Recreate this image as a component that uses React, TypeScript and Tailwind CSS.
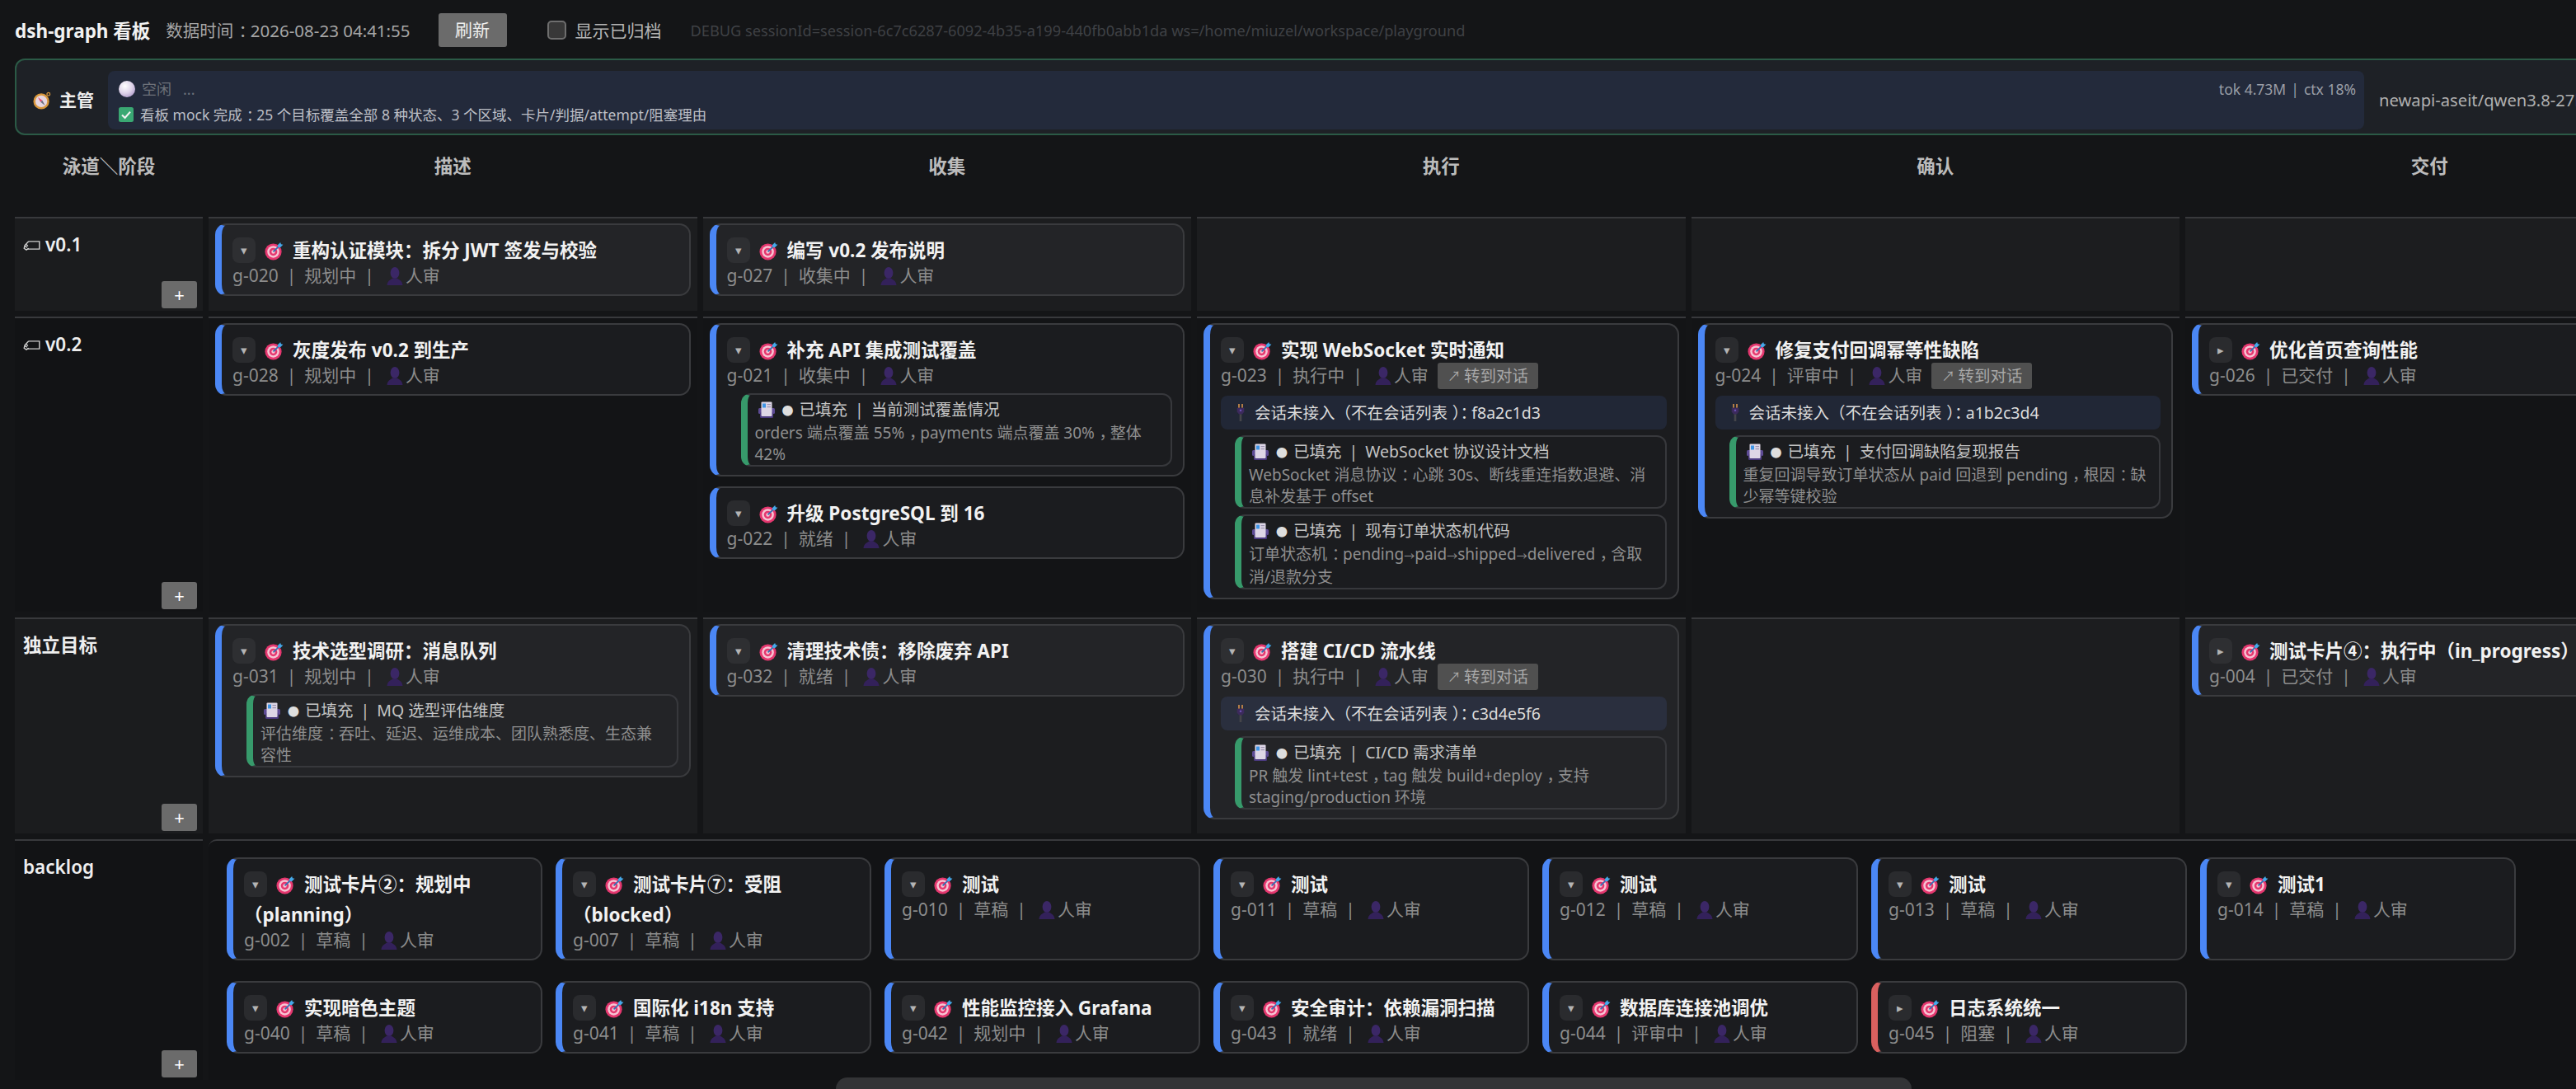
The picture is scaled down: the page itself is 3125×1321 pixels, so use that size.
import type { ReactNode } from "react";

// drawn emoji, no colour emoji font on the box
function Target() {
  return (
    <svg viewBox="0 0 24 24" className="mr-[11px] inline-block h-[23px] w-[23px] align-[-4px]">
      <circle cx="11" cy="13" r="10.5" fill="#e5376f" />
      <circle cx="11" cy="13" r="7.6" fill="#f7c4d3" />
      <circle cx="11" cy="13" r="5" fill="#e5376f" />
      <circle cx="11" cy="13" r="2.3" fill="#f7c4d3" />
      <path d="M11 13 L19 5" stroke="#2f6fb5" strokeWidth="1.8" />
      <path d="M16.5 4.5 L20 1 L20.8 3.4 L23.4 4 L19.8 7.6 L17 7 Z" fill="#45a9ea" />
    </svg>
  );
}

function Compass() {
  return (
    <svg viewBox="0 0 24 24" className="h-[22px] w-[22px] shrink-0">
      <circle cx="20.5" cy="3.5" r="2" fill="none" stroke="#d9973c" strokeWidth="1.4" />
      <circle cx="11" cy="13" r="10.5" fill="#d9973c" />
      <circle cx="11" cy="13" r="7.8" fill="#e6d6df" />
      <path d="M6.5 7.5 L12.4 11.8 L10 14 Z" fill="#e8476b" />
      <path d="M16 18.5 L10 14 L12.4 11.8 Z" fill="#6d6f80" />
    </svg>
  );
}

function Tag() {
  return (
    <svg viewBox="0 0 22 14" className="h-[13px] w-[21px] shrink-0" fill="none" stroke="#d0d0d0" strokeWidth="1.5">
      <path d="M7 2 H21 V12 H5" />
      <path d="M7 2 L2 7 L1 11 L4 13 L7 11 M3 5 L6 8 M2 8 L5 10" />
    </svg>
  );
}

function Person() {
  return (
    <svg viewBox="0 0 20 22" className="h-[22px] w-[20px] shrink-0">
      <ellipse cx="10" cy="7" rx="5.4" ry="7" fill="#3b2766" />
      <path d="M0.5 22 C1 16.5 5 15 7.5 13.5 H12.5 C15 15 19 16.5 19.5 22 Z" fill="#33215a" />
    </svg>
  );
}

function Plug() {
  return (
    <svg viewBox="0 0 10 22" className="h-[21px] w-[10px] shrink-0">
      <rect x="2" y="0" width="1.8" height="5" fill="#c98a4a" />
      <rect x="6.2" y="0" width="1.8" height="5" fill="#c98a4a" />
      <path d="M0.5 5 H9.5 V10 L7 13 H3 L0.5 10 Z" fill="#3c2a5c" />
      <rect x="3.8" y="7" width="2.4" height="2.4" fill="#6a4fb0" />
      <rect x="3.6" y="13" width="2.8" height="9" fill="#45454a" />
    </svg>
  );
}

function CardFile() {
  return (
    <svg viewBox="0 0 20 20" className="inline-block h-[20px] w-[20px] shrink-0">
      <rect x="0" y="8" width="20" height="7" rx="1.5" fill="#5d4b95" />
      <rect x="2" y="13" width="16" height="7" rx="1.5" fill="#4b3a80" />
      <rect x="3.5" y="0.5" width="13" height="17.5" rx="1" fill="#ddd6e6" />
      <rect x="5" y="2.5" width="4" height="5" fill="#3f95e6" />
      <rect x="10.5" y="3" width="4.5" height="1.2" fill="#9c93b0" />
      <rect x="10.5" y="6" width="4.5" height="1.2" fill="#9c93b0" />
    </svg>
  );
}

function Orb() {
  return (
    <svg viewBox="0 0 20 20" className="h-[20px] w-[20px] shrink-0">
      <defs>
        <radialGradient id="orb" cx="0.38" cy="0.32" r="0.8">
          <stop offset="0" stopColor="#ffffff" />
          <stop offset="0.55" stopColor="#ddd2e8" />
          <stop offset="1" stopColor="#a993c6" />
        </radialGradient>
      </defs>
      <circle cx="10" cy="10" r="10" fill="url(#orb)" />
    </svg>
  );
}

function Check() {
  return (
    <svg viewBox="0 0 18 18" className="h-[18px] w-[18px] shrink-0">
      <rect width="18" height="18" rx="2.5" fill="#3aa873" />
      <path d="M4 9.5 L7.6 13 L14 5.6" fill="none" stroke="#f2f2f2" strokeWidth="2.2" />
    </svg>
  );
}

// the reference's regular face centres full-width punctuation and has a narrow arrow
function Fw({ text }: { text: string }) {
  return (
    <>
      {text.split(/([）：，→])/).map((part, i) => {
        if (part === "→") return <span key={i} className="text-[13px]">{part}</span>;
        if (part === "）" || part === "：" || part === "，") {
          return <span key={i} className="pl-[0.3em] tracking-[-0.3em]">{part}</span>;
        }
        return part;
      })}
    </>
  );
}

type Note = { title: string; lines: string[] };

interface Goal {
  id: string;
  title: string;
  status: string;
  session?: string;
  notes?: Note[];
  closed?: boolean;
  blocked?: boolean;
}

function Meta({ goal }: { goal: Goal }) {
  return (
    <div className="mt-[1px] flex h-[24px] items-center whitespace-nowrap text-[21px] text-[#8c8c8c]">
      <span>{goal.id}</span>
      <span className="mx-[10px]">|</span>
      <span>{goal.status}</span>
      <span className="mx-[10px]">|</span>
      <span className="ml-[5px] mr-[3px]">
        <Person />
      </span>
      <span>人审</span>
      {goal.session && (
        <button className="ml-[11px] flex h-[32px] items-center gap-[4px] rounded-[3px] bg-[#505050] px-[12px] text-[19.5px] text-[#a8a8a8]">
          <span className="text-[16px]">↗</span>
          转到对话
        </button>
      )}
    </div>
  );
}

function NoteCard({ note }: { note: Note }) {
  return (
    <div className="ml-[17px] rounded-[12px] border-2 border-l-[8px] border-[#37383c] border-l-[#379a6b] pl-[9px] pr-[12px] pt-[5px]">
      <div className="flex h-[26px] items-center whitespace-nowrap pl-[4px] text-[19.5px] text-[#c4c4c4]">
        <CardFile />
        <span className="ml-[9px] mr-[7px] text-[14px] text-[#dedede]">●</span>
        <span>已填充</span>
        <span className="mx-[9px]">|</span>
        <span>{note.title}</span>
      </div>
      <div className="mt-[2px] whitespace-nowrap text-[19px] leading-[26px] text-[#8f8f8f]">
        {note.lines.map((line) => (
          <div key={line}>
            <Fw text={line} />
          </div>
        ))}
      </div>
    </div>
  );
}

function GoalCard({ goal, light }: { goal: Goal; light: boolean }) {
  return (
    <div
      className={`rounded-[14px] border-2 border-l-[8px] border-[#3a3b3e] pb-[10px] pl-[13px] pr-[13px] pt-[12px] ${
        goal.blocked ? "border-l-[#d9605f]" : "border-l-[#4b87f5]"
      } ${light ? "bg-[#232427]" : "bg-[#1b1c1f]"}`}
    >
      <div className="text-[22.5px] font-bold leading-[37px] text-[#f2f2f2]">
        <span
          className={`mr-[11px] inline-block h-[31px] w-[28px] overflow-hidden rounded-[8px] text-center align-[-7px] text-[15px] font-normal leading-[31px] text-[#b4b4b4] ${
            light ? "bg-[#2e2f32]" : "bg-[#2a2b2e]"
          }`}
        >
          {goal.closed ? "▸" : "▾"}
        </span>
        <Target />
        {goal.title}
      </div>
      <Meta goal={goal} />
      {goal.session && (
        <div
          className={`mt-[12px] flex h-[41px] items-center gap-[12px] rounded-[8px] pl-[19px] text-[19.5px] text-[#dcdcdc] ${
            light ? "bg-[#2a2f3e]" : "bg-[#212736]"
          }`}
        >
          <Plug />
          <span>
            <Fw text={`会话未接入（不在会话列表）：${goal.session}`} />
          </span>
        </div>
      )}
      {goal.notes && (
        <div className={`flex flex-col gap-[7px] ${goal.session ? "mt-[7px]" : "mt-[9px]"}`}>
          {goal.notes.map((n) => (
            <NoteCard key={n.title} note={n} />
          ))}
        </div>
      )}
    </div>
  );
}

const ws: Note = {
  title: "WebSocket 协议设计文档",
  lines: ["WebSocket 消息协议：心跳 30s、断线重连指数退避、消", "息补发基于 offset"],
};
const fsm: Note = {
  title: "现有订单状态机代码",
  lines: ["订单状态机：pending→paid→shipped→delivered，含取", "消/退款分支"],
};

const rows: { lane: ReactNode; light: boolean; cols: Goal[][] }[] = [
  {
    lane: (
      <span className="flex items-center gap-[6px]">
        <Tag />
        v0.1
      </span>
    ),
    light: true,
    cols: [
      [{ id: "g-020", title: "重构认证模块：拆分 JWT 签发与校验", status: "规划中" }],
      [{ id: "g-027", title: "编写 v0.2 发布说明", status: "收集中" }],
      [],
      [],
      [],
    ],
  },
  {
    lane: (
      <span className="flex items-center gap-[6px]">
        <Tag />
        v0.2
      </span>
    ),
    light: false,
    cols: [
      [{ id: "g-028", title: "灰度发布 v0.2 到生产", status: "规划中" }],
      [
        {
          id: "g-021",
          title: "补充 API 集成测试覆盖",
          status: "收集中",
          notes: [{ title: "当前测试覆盖情况", lines: ["orders 端点覆盖 55%，payments 端点覆盖 30%，整体", "42%"] }],
        },
        { id: "g-022", title: "升级 PostgreSQL 到 16", status: "就绪" },
      ],
      [{ id: "g-023", title: "实现 WebSocket 实时通知", status: "执行中", session: "f8a2c1d3", notes: [ws, fsm] }],
      [
        {
          id: "g-024",
          title: "修复支付回调幂等性缺陷",
          status: "评审中",
          session: "a1b2c3d4",
          notes: [
            {
              title: "支付回调缺陷复现报告",
              lines: ["重复回调导致订单状态从 paid 回退到 pending，根因：缺", "少幂等键校验"],
            },
          ],
        },
      ],
      [{ id: "g-026", title: "优化首页查询性能", status: "已交付", closed: true }],
    ],
  },
  {
    lane: "独立目标",
    light: true,
    cols: [
      [
        {
          id: "g-031",
          title: "技术选型调研：消息队列",
          status: "规划中",
          notes: [{ title: "MQ 选型评估维度", lines: ["评估维度：吞吐、延迟、运维成本、团队熟悉度、生态兼", "容性"] }],
        },
      ],
      [{ id: "g-032", title: "清理技术债：移除废弃 API", status: "就绪" }],
      [
        {
          id: "g-030",
          title: "搭建 CI/CD 流水线",
          status: "执行中",
          session: "c3d4e5f6",
          notes: [{ title: "CI/CD 需求清单", lines: ["PR 触发 lint+test，tag 触发 build+deploy，支持", "staging/production 环境"] }],
        },
      ],
      [],
      [{ id: "g-004", title: "测试卡片④：执行中（in_progress）", status: "已交付", closed: true }],
    ],
  },
];

const backlog: Goal[] = [
  { id: "g-002", title: "测试卡片②：规划中（planning）", status: "草稿" },
  { id: "g-007", title: "测试卡片⑦：受阻（blocked）", status: "草稿" },
  { id: "g-010", title: "测试", status: "草稿" },
  { id: "g-011", title: "测试", status: "草稿" },
  { id: "g-012", title: "测试", status: "草稿" },
  { id: "g-013", title: "测试", status: "草稿" },
  { id: "g-014", title: "测试1", status: "草稿" },
  { id: "g-040", title: "实现暗色主题", status: "草稿" },
  { id: "g-041", title: "国际化 i18n 支持", status: "草稿" },
  { id: "g-042", title: "性能监控接入 Grafana", status: "规划中" },
  { id: "g-043", title: "安全审计：依赖漏洞扫描", status: "就绪" },
  { id: "g-044", title: "数据库连接池调优", status: "评审中" },
  { id: "g-045", title: "日志系统统一", status: "阻塞", closed: true, blocked: true },
];

const stages = ["描述", "收集", "执行", "确认", "交付"];

function Lane({ light, children }: { light: boolean; children: ReactNode }) {
  return (
    <div
      className={`flex flex-col justify-between border-t-2 border-[#38393c] pb-[3px] pl-[10px] pr-[7px] pt-[17px] ${
        light ? "bg-[#1b1c1e]" : "bg-[#121315]"
      }`}
    >
      <div className="text-[22.5px] font-semibold leading-[30px] text-[#eeeeee]">{children}</div>
      <button className="flex h-[33px] w-[43px] items-center justify-center self-end rounded-[3px] bg-[#6b6b6b] text-[22px] text-white">
        +
      </button>
    </div>
  );
}

export default function App() {
  return (
    <div className="relative h-[1321px] w-[3125px] overflow-hidden bg-[#141517] pt-[16px] font-['Noto_Sans','Noto_Sans_CJK_SC',sans-serif]">
      <header className="mb-[14px] flex h-[41px] items-center whitespace-nowrap pl-[18px]">
        <h1 className="mt-[2px] text-[22.5px] font-bold text-[#f2f2f2]">dsh-graph 看板</h1>
        <span className="ml-[19px] mt-[2px] text-[20.5px] text-[#a6a6a6]">
          <Fw text="数据时间：2026-08-23 04:41:55" />
        </span>
        <button className="ml-[34px] h-[41px] w-[83px] rounded-[3px] bg-[#6b6b6b] text-[21px] text-[#eeeeee]">刷新</button>
        <label className="ml-[49px] flex items-center gap-[11px] text-[21px] text-[#b5b5b5]">
          <span className="h-[23px] w-[23px] rounded-[5px] border-2 border-[#6e6e6e] bg-[#383838]" />
          <span className="mt-[2px]">显示已归档</span>
        </label>
        <span className="ml-[35px] mt-[2px] text-[18.2px] text-[#3f4145]">
          DEBUG sessionId=session-6c7c6287-6092-4b35-a199-440fb0abb1da ws=/home/miuzel/workspace/playground
        </span>
      </header>

      <section className="ml-[18px] flex h-[93px] w-[3225px] items-center rounded-l-[12px] border-2 border-[#2b5a46] bg-[#1e2126] pt-[8px]">
        <div className="flex w-[111px] items-center gap-[10px] pl-[20px] text-[21px] font-bold text-[#eeeeee]">
          <Compass />
          主管
        </div>
        <div className="flex h-[71px] w-[2737px] flex-col rounded-[8px] bg-[#232a3b] pl-[13px] pr-[10px] pt-[7px] text-[18px]">
          <div className="flex h-[30px] items-center gap-[8px] text-[#6d7179]">
            <Orb />
            <span>空闲</span>
            <span className="ml-[6px]">...</span>
            <span className="ml-auto text-[17.5px] text-[#9a9ea6]">
              tok 4.73M<span className="mx-[6px]">|</span>ctx 18%
            </span>
          </div>
          <div className="mt-[1px] flex h-[30px] items-center gap-[8px] text-[17.5px] text-[#bcbfc6]">
            <Check />
            <span>
              <Fw text="看板 mock 完成：25 个目标覆盖全部 8 种状态、3 个区域、卡片/判据/attempt/阻塞理由" />
            </span>
          </div>
        </div>
        <span className="ml-[18px] whitespace-nowrap text-[20.2px] text-[#b0b0b0]">newapi-aseit/qwen3.8-27b</span>
      </section>

      <main className="ml-[18px] grid w-[3226px] grid-cols-[228px_repeat(5,592.5px)] grid-rows-[92px_114px_358px_262px_292px] gap-[7px]">
        <div className="pt-[21px] text-center text-[22.5px] font-bold leading-[34px] text-[#bcbcbc]">泳道＼阶段</div>
        {stages.map((s) => (
          <div key={s} className="pt-[21px] text-center text-[22.5px] font-bold leading-[34px] text-[#bcbcbc]">
            {s}
          </div>
        ))}

        {rows.map((row, i) => (
          <div key={i} className="contents">
            <Lane light={row.light}>{row.lane}</Lane>
            {row.cols.map((goals, j) => (
              <div
                key={j}
                className={`flex flex-col gap-[12px] border-t-2 border-[#38393c] px-[8px] pt-[6px] ${
                  row.light ? "bg-[#1c1d1f]" : "bg-[#131416]"
                }`}
              >
                {goals.map((g) => (
                  <GoalCard key={g.id} goal={g} light={row.light} />
                ))}
              </div>
            ))}
          </div>
        ))}

        <Lane light={false}>backlog</Lane>
        <div className="col-span-5 flex flex-wrap content-start gap-x-[16px] gap-y-[25px] rounded-tl-[10px] border-t-2 border-[#38393c] bg-[#121315] pl-[22px] pt-[20px]">
          {backlog.map((g) => (
            <div key={g.id} className="flex w-[383px] flex-col [&>div]:flex-1">
              <GoalCard goal={g} light={false} />
            </div>
          ))}
        </div>
      </main>

      {/* page scrollbar */}
      <div className="absolute bottom-0 left-[1014px] h-[14px] w-[1305px] rounded-t-[14px] bg-[#333436]" />
    </div>
  );
}
